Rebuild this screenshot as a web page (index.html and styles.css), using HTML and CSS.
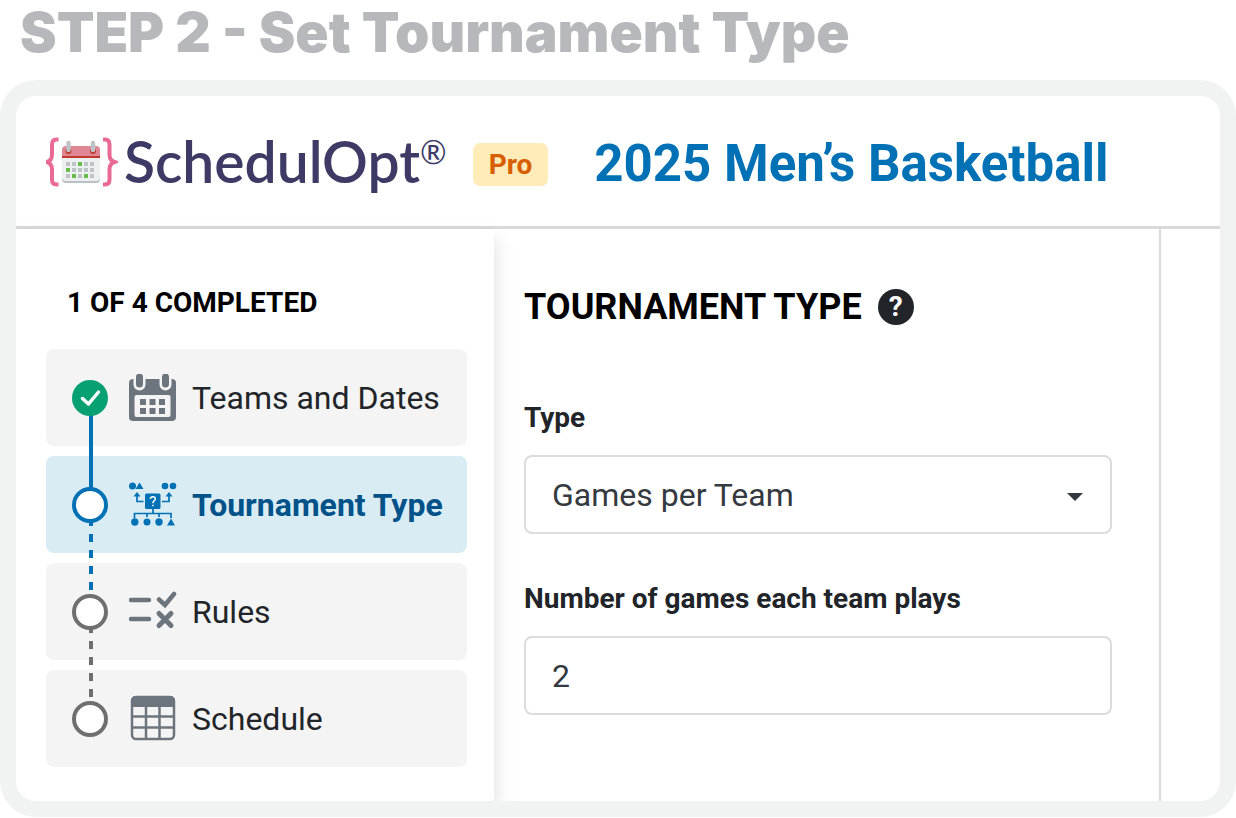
FILE: index.html
```html
<!DOCTYPE html>
<html lang="en">
<head>
  <meta charset="UTF-8" />
  <meta name="viewport" content="width=device-width, initial-scale=1" />
  <title>SchedulOpt - Tournament Type</title>
  <link rel="stylesheet" href="styles.css">
</head>
<body>

  <h1 class="step-title">STEP 2 - Set Tournament Type</h1>

  <div class="frame">
    <header class="header">
      <a class="logo" href="#">
        <svg class="logo-icon" width="72" height="52" viewBox="0 0 72 52" aria-hidden="true">
          <path d="M12.500 3.500h-2q-4.500 0-4.500 5v10q0 6-5 7.500q5 1.500 5 7.500v10q0 5 4.500 5h2M57 3.500h2q4.500 0 4.500 5v10q0 6 5 7.500q-5 1.500-5 7.500v10q0 5-4.500 5h-2" fill="none" stroke="#e96a95" stroke-width="4" />
          <rect x="16" y="12" width="38" height="35" rx="4" fill="#b9c1c4" />
          <rect x="16" y="10" width="38" height="35" rx="4" fill="#ecf0f1" />
          <path d="M16 20v-6q0-4 4-4h30q4 0 4 4v6z" fill="#df8794" />
          <path d="M16 20h38v2H16z" fill="#c0392b" />
          <circle cx="22.500" cy="15" r="3" fill="#c0392b" />
          <circle cx="47" cy="15" r="3" fill="#c0392b" />
          <path d="M22.500 7v7M47 7v7" stroke="#bdc3c7" stroke-width="4.500" stroke-linecap="round" />
          <path d="M20 26h4v4h-4zM26 26h4v4h-4zM38 26h4v4h-4zM44 26h4v4h-4zM26 32h4v4h-4zM32 32h4v4h-4zM38 32h4v4h-4zM44 32h4v4h-4zM20 38h4v4h-4zM32 38h4v4h-4zM44 38h4v4h-4z" fill="#bdc3c7" />
          <path d="M32 26h4v4h-4zM20 32h4v4h-4zM26 38h4v4h-4zM38 38h4v4h-4z" fill="#67bd45" />
        </svg>
        <span class="logo-name">SchedulOpt</span><span class="logo-mark">®</span>
      </a>
      <span class="badge">Pro</span>
      <h2 class="event-name">2025 Men’s Basketball</h2>
    </header>

    <div class="content">
      <nav class="sidebar" aria-label="Steps">
        <p class="progress">1 OF 4 COMPLETED</p>
        <ol class="steps">
          <li>
            <a class="step done" href="#">
              <span class="dot">
                <svg width="36" height="36" viewBox="0 0 36 36" aria-hidden="true">
                  <path d="M10.500 18.500l6 5.500L26.500 12" fill="none" stroke="#fff" stroke-width="3.500" stroke-linecap="round" stroke-linejoin="round" />
                </svg>
              </span>
              <svg class="step-icon" width="48" height="48" viewBox="0 0 48 48" aria-hidden="true">
                <rect x="0" y="5" width="47" height="42" rx="4" fill="#6c757d" />
                <path d="M10.500 0v10.500M36.500 0v10.500" stroke="#f4f4f4" stroke-width="12" stroke-linecap="round" />
                <path d="M10.500 3v7M36.500 3v7" stroke="#6c757d" stroke-width="7" stroke-linecap="round" />
                <rect x="5.500" y="21" width="36" height="22" rx="2" fill="#f4f4f4" />
                <path d="M11 25h6v6h-6zM20.500 25h6v6h-6zM30 25h6v6h-6zM11 34h6v6h-6zM20.500 34h6v6h-6zM30 34h6v6h-6z" fill="#6c757d" />
              </svg>
              <span>Teams and Dates</span>
            </a>
          </li>
          <li>
            <a class="step current" href="#" aria-current="step">
              <span class="dot"></span>
              <svg class="step-icon" width="48" height="48" viewBox="0 0 48 48" fill="#0071b5" aria-hidden="true">
                <circle cx="3.500" cy="5" r="3.500" />
                <path d="M10.500 1.500l4 6.500h-8z" />
                <circle cx="36" cy="5" r="3.300" />
                <circle cx="44" cy="5" r="3.300" />
                <rect x="16" y="12.500" width="15.500" height="15.500" rx="1.500" />
                <path d="M21.300 18q.2-2.300 2.600-2.300q2.400 0 2.400 2.100q0 1.200-1.200 2q-1.200.8-1.200 2v.5M23.900 23.700v1.600" fill="none" stroke="#fff" stroke-width="1.500" />
                <path d="M14.500 20.500H8V13M33 20.500h7V13M24 28v4.500M5.500 37v-4.500h36.500V37M18 32.500V36M30 32.500V36" fill="none" stroke="#0071b5" stroke-width="1.700" />
                <path d="M8 11l3.500 4.500h-7zM40 11l3.500 4.500h-7z" />
                <circle cx="5.800" cy="41" r="3.700" />
                <circle cx="18" cy="41" r="3.500" />
                <circle cx="30" cy="41" r="3.700" />
                <path d="M42 37.500l4 7h-8z" />
              </svg>
              <span>Tournament Type</span>
            </a>
          </li>
          <li>
            <a class="step" href="#">
              <span class="dot"></span>
              <svg class="step-icon" width="48" height="48" viewBox="0 0 48 48" fill="none" stroke="#6c757d" stroke-width="4.500" stroke-linecap="round" aria-hidden="true">
                <path d="M2 12h18M2 31h18" />
                <path d="M30 11.500l6 5.500L45 6" />
                <path d="M30 25.500l12 12M42 25.500l-12 12" stroke-width="5" />
              </svg>
              <span>Rules</span>
            </a>
          </li>
          <li>
            <a class="step" href="#">
              <span class="dot"></span>
              <svg class="step-icon" width="48" height="48" viewBox="0 0 48 48" aria-hidden="true">
                <rect x="3" y="2" width="42" height="42" rx="4" fill="none" stroke="#6c757d" stroke-width="2.500" />
                <path d="M2 12V6q0-5 5-5h34q5 0 5 5v6z" fill="#6c757d" />
                <path d="M3 21.500h42M3 32.500h42M17 11v33M30.500 11v33" stroke="#6c757d" stroke-width="2.500" />
              </svg>
              <span>Schedule</span>
            </a>
          </li>
        </ol>
      </nav>

      <main class="main">
        <div class="section-title">
          <h3>TOURNAMENT TYPE</h3>
          <button class="help" type="button" aria-label="Help">?</button>
        </div>

        <form>
          <div class="field">
            <label for="type">Type</label>
            <div class="select-wrap">
              <select id="type">
                <option>Games per Team</option>
              </select>
              <svg class="caret" width="16" height="8" viewBox="0 0 16 8" aria-hidden="true"><path d="M0 0h16L8 8z" fill="#343a40" /></svg>
            </div>
          </div>
          <div class="field">
            <label for="games">Number of games each team plays</label>
            <input type="text" id="games" inputmode="numeric" value="2" />
          </div>
        </form>
      </main>
    </div>
  </div>

</body>
</html>
```

FILE: styles.css
```css
* { box-sizing: border-box; }
body { margin: 0; background: #fff; color: #212529; font-family: Roboto, Arial, sans-serif; }
h1, h2, h3, p, ol { margin: 0; padding: 0; }
a { color: inherit; text-decoration: none; }

.step-title { padding: 2px 20px 18px; color: #b7b8bc; font-family: Inter, sans-serif; font-size: 55px; font-weight: 900; font-optical-sizing: none; line-height: 60px; }

.frame { border: 16px solid #f1f3f2; border-radius: 36px; overflow: hidden; }

.header { display: flex; align-items: center; padding: 32px 30px 31px; border-bottom: 3px solid #d9d9d9; }
.logo { display: flex; align-items: center; color: #3d3a66; font-family: Lato, sans-serif; }
.logo-icon { margin-right: 6px; }
.logo-name { font-size: 57px; font-weight: 600; line-height: 67px; }
.logo-mark { align-self: flex-start; font-size: 32px; line-height: 48px; }
.badge { margin: 5px 0 0 26px; padding: 0 16px; border-radius: 7px; background: #ffecb8; color: #d75f00; font-size: 28px; font-weight: 700; line-height: 43px; }
.event-name { margin: 5px 0 0 46px; color: #0071b5; font-size: 51px; font-weight: 700; line-height: 60px; }

.content { display: flex; }
.sidebar { position: relative; width: 478px; flex: none; padding: 56px 27px 34px 30px; box-shadow: 0 10px 20px rgba(0, 0, 0, 0.14); }
.progress { padding-left: 21px; color: #000; font-size: 28px; font-weight: 700; line-height: 35px; }
.steps { display: grid; gap: 10px; margin-top: 29px; list-style: none; }

.step { position: relative; display: flex; align-items: center; height: 97px; padding-left: 26px; border-radius: 8px; background: #f4f4f4; font-size: 32px; line-height: 38px; }
.step-icon { margin: 0 15px 0 21px; }
.dot { position: relative; z-index: 2; width: 36px; height: 36px; border: 4px solid #6f6f6f; border-radius: 50%; background: #fff; }
.dot svg { display: block; }
.done .dot { border: 0; background: #06a073; }
.current { background: #daecf3; color: #005289; font-weight: 700; }
.current .dot { border-color: #0071b5; }

/* line down to the next step */
.step::after { content: ""; position: absolute; z-index: 1; left: 43px; top: 62px; width: 4px; height: 78px; background: repeating-linear-gradient(#6f6f6f 0 8px, transparent 8px 16px); }
.done::after { background: #0071b5; }
.current::after { background: repeating-linear-gradient(#0071b5 0 8px, transparent 8px 16px); }
li:last-child .step::after { display: none; }

.main { flex: 1; max-width: 667px; padding: 57px 47px 86px 30px; border-right: 2px solid #d9d9d9; }
.section-title { display: flex; align-items: center; gap: 16px; }
.section-title h3 { color: #000; font-size: 36px; font-weight: 700; line-height: 42px; }
.help { width: 36px; height: 36px; padding: 0; border: 0; border-radius: 50%; background: #212529; color: #fff; font-family: Roboto, sans-serif; font-size: 28px; font-weight: 700; line-height: 36px; }

form { display: grid; gap: 48px; margin-top: 73px; }
label { display: block; margin-bottom: 20px; font-size: 28px; font-weight: 700; line-height: 34px; }
.select-wrap { position: relative; }
select, input { display: block; width: 100%; height: 79px; padding: 0 26px; border: 2px solid #dcdcdc; border-radius: 8px; background: #fff; color: #343a40; font-family: Roboto, sans-serif; font-size: 32px; appearance: none; }
.caret { position: absolute; right: 29px; top: 38px; pointer-events: none; }
```
